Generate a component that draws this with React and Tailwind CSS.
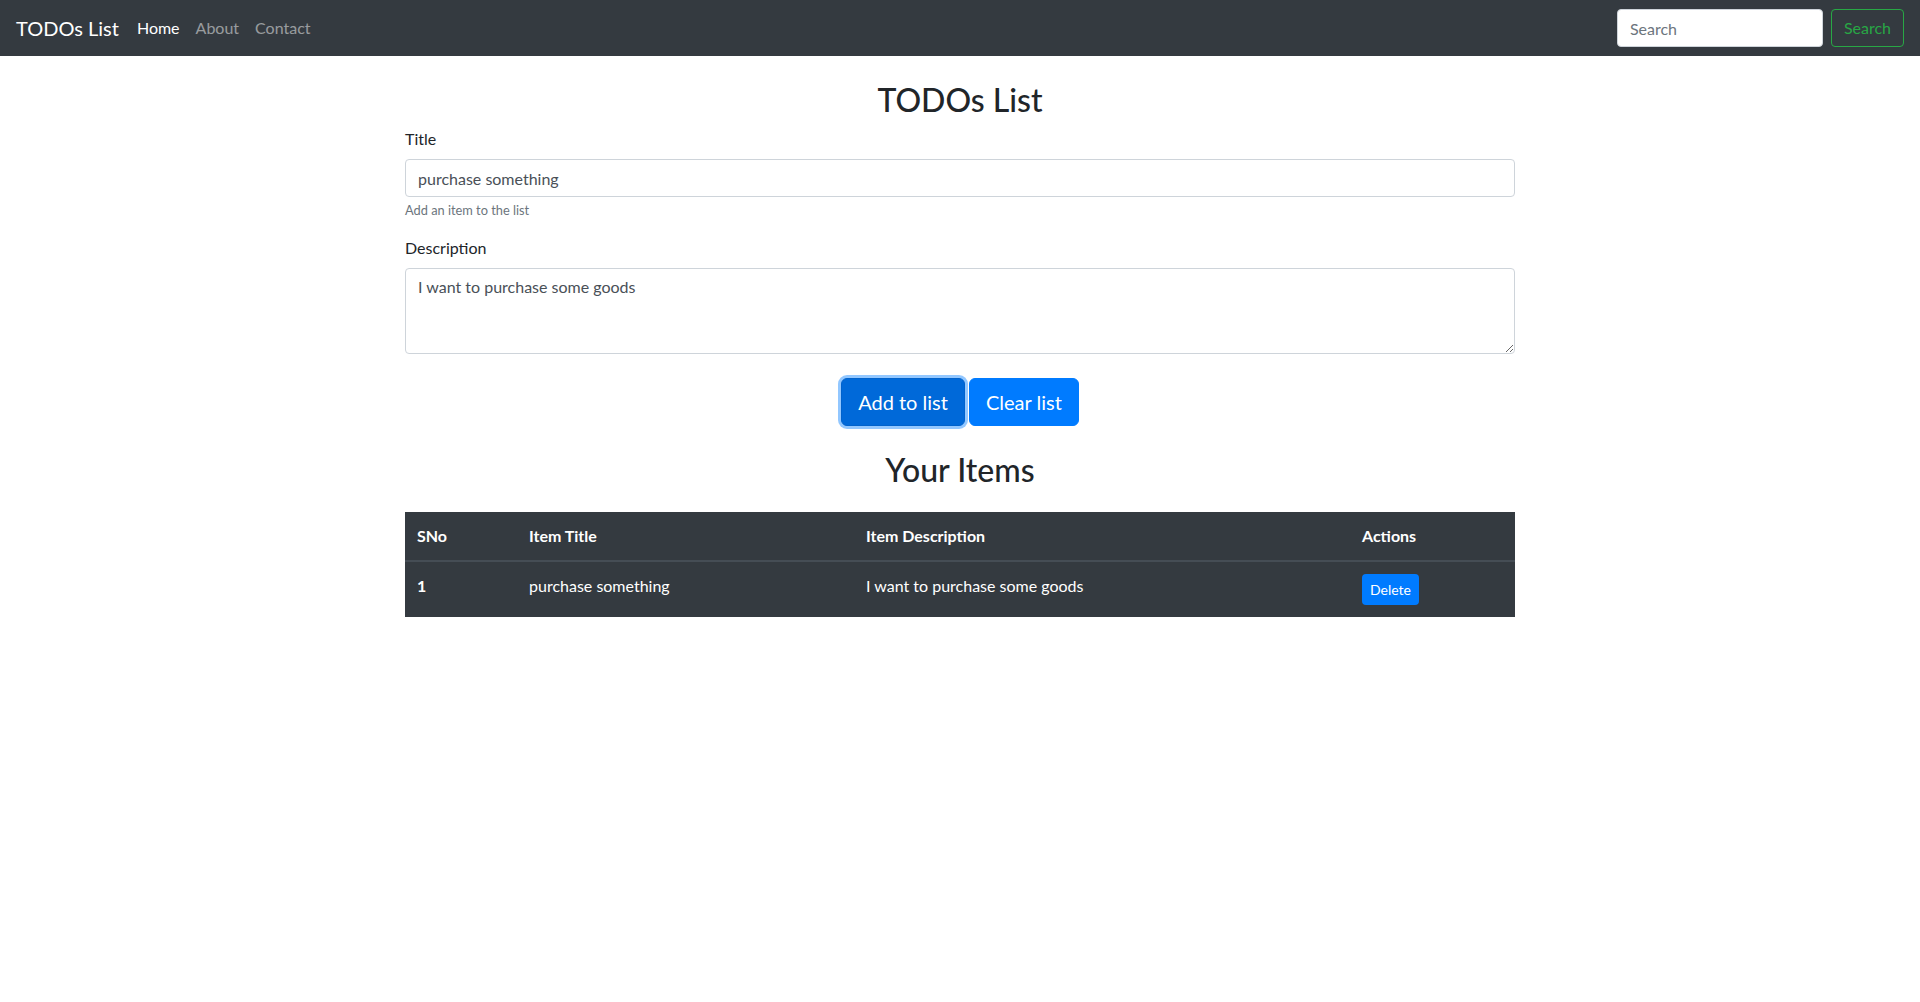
import React from 'react';

const items = [
  { sno: 1, title: 'purchase something', desc: 'I want to purchase some goods' },
];

const Navbar = () => (
  <nav className="h-14 bg-[#343a40] px-4 flex items-center">
    <a className="text-xl text-white mr-[10px] leading-[30px] py-[5px]">TODOs List</a>
    <ul className="flex items-center">
      <li className="px-2 text-white">Home</li>
      <li className="px-2 text-white/50">About</li>
      <li className="px-2 text-white/50">Contact</li>
    </ul>
    <form className="ml-auto flex items-center">
      <input
        className="w-[206px] h-[38px] rounded bg-white border border-[#ced4da] px-3 text-[#495057] placeholder:text-[#6c757d] outline-none mr-2"
        placeholder="Search"
      />
      <button type="button" className="h-[38px] px-3 rounded border border-[#28a745] text-[#28a745]">
        Search
      </button>
    </form>
  </nav>
);

export default function App() {
  return (
    <div className="min-h-screen bg-white text-[#212529] text-base leading-6" style={{ fontFamily: 'Lato, "Segoe UI", sans-serif' }}>
      <Navbar />
      <div className="w-[1110px] mx-auto mt-[25px]">
        <h2 className="text-[32px] leading-[38px] font-medium text-center mb-2">TODOs List</h2>
        <div className="mb-4">
          <label className="block mb-2">Title</label>
          <input
            className="w-full h-[38px] rounded border border-[#ced4da] px-3 text-[#495057] outline-none"
            defaultValue="purchase something"
          />
          <small className="block mt-1 text-[12.8px] leading-[19px] text-[#6c757d]">Add an item to the list</small>
        </div>
        <div>
          <label className="block mb-2">Description</label>
          <textarea
            rows={3}
            className="block w-full h-[86px] rounded border border-[#ced4da] px-3 py-1.5 text-[#495057] outline-none"
            defaultValue="I want to purchase some goods"
          />
        </div>
        <div className="flex justify-center gap-1 mt-[24px]">
          <button type="button" className="h-12 px-4 text-xl rounded-md bg-[#0069d9] text-white border border-[#0062cc] shadow-[0_0_0_3px_rgba(38,143,255,0.5)]">
            Add to list
          </button>
          <button type="button" className="h-12 px-4 text-xl rounded-md bg-[#007bff] text-white border border-[#007bff]">
            Clear list
          </button>
        </div>
        <h2 className="text-[32px] leading-[38px] font-medium text-center mt-[25px]">Your Items</h2>
        <table className="w-full mt-[23px] bg-[#343a40] text-white border-collapse">
          <thead>
            <tr className="text-left">
              <th className="w-[112px] px-3 py-3 font-bold border-b-2 border-[#454d55]">SNo</th>
              <th className="w-[337px] px-3 py-3 font-bold border-b-2 border-[#454d55]">Item Title</th>
              <th className="w-[496px] px-3 py-3 font-bold border-b-2 border-[#454d55]">Item Description</th>
              <th className="px-3 py-3 font-bold border-b-2 border-[#454d55]">Actions</th>
            </tr>
          </thead>
          <tbody>
            {items.map((item) => (
              <tr key={item.sno}>
                <th className="px-3 py-3 text-left font-bold align-top">{item.sno}</th>
                <td className="px-3 py-3 align-top">{item.title}</td>
                <td className="px-3 py-3 align-top">{item.desc}</td>
                <td className="px-3 py-3 align-top">
                  <button type="button" className="h-[31px] px-2 text-sm rounded bg-[#007bff] text-white">Delete</button>
                </td>
              </tr>
            ))}
          </tbody>
        </table>
      </div>
    </div>
  );
}
